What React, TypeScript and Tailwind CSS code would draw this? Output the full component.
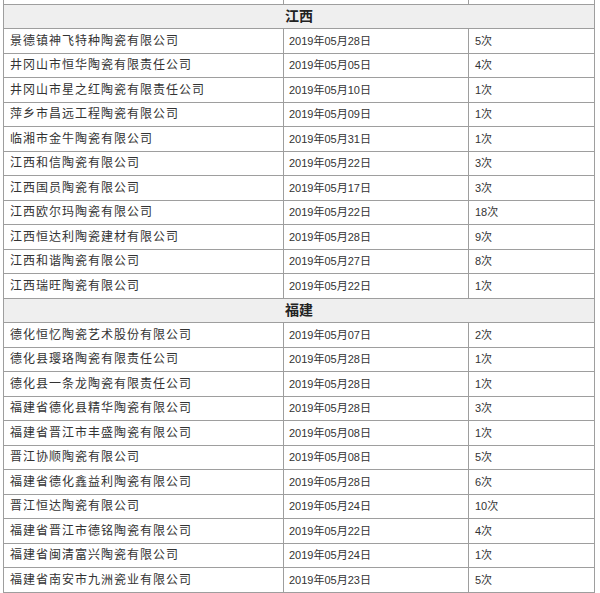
const jiangxi: [string, string, string][] = [
  ['景德镇神飞特种陶瓷有限公司', '2019年05月28日', '5次'],
  ['井冈山市恒华陶瓷有限责任公司', '2019年05月05日', '4次'],
  ['井冈山市星之红陶瓷有限责任公司', '2019年05月10日', '1次'],
  ['萍乡市昌远工程陶瓷有限公司', '2019年05月09日', '1次'],
  ['临湘市金牛陶瓷有限公司', '2019年05月31日', '1次'],
  ['江西和信陶瓷有限公司', '2019年05月22日', '3次'],
  ['江西国员陶瓷有限公司', '2019年05月17日', '3次'],
  ['江西欧尔玛陶瓷有限公司', '2019年05月22日', '18次'],
  ['江西恒达利陶瓷建材有限公司', '2019年05月28日', '9次'],
  ['江西和谐陶瓷有限公司', '2019年05月27日', '8次'],
  ['江西瑞旺陶瓷有限公司', '2019年05月22日', '1次'],
];

const fujian: [string, string, string][] = [
  ['德化恒忆陶瓷艺术股份有限公司', '2019年05月07日', '2次'],
  ['德化县璎珞陶瓷有限责任公司', '2019年05月28日', '1次'],
  ['德化县一条龙陶瓷有限责任公司', '2019年05月28日', '1次'],
  ['福建省德化县精华陶瓷有限公司', '2019年05月28日', '3次'],
  ['福建省晋江市丰盛陶瓷有限公司', '2019年05月08日', '1次'],
  ['晋江协顺陶瓷有限公司', '2019年05月08日', '5次'],
  ['福建省德化鑫益利陶瓷有限公司', '2019年05月28日', '6次'],
  ['晋江恒达陶瓷有限公司', '2019年05月24日', '10次'],
  ['福建省晋江市德铭陶瓷有限公司', '2019年05月22日', '4次'],
  ['福建省闽清富兴陶瓷有限公司', '2019年05月24日', '1次'],
  ['福建省南安市九洲瓷业有限公司', '2019年05月23日', '5次'],
];

const cell = 'border border-[#9e9e9e] px-[6px] py-0 align-middle';

function ProvinceRow({ name }: { name: string }) {
  return (
    <tr className="h-[24.5px] bg-[#efefef]">
      <td colSpan={3} className={`${cell} text-center text-[14px] font-bold text-[#222]`}>
        {name}
      </td>
    </tr>
  );
}

function DataRow({ row }: { row: [string, string, string] }) {
  return (
    <tr className="h-[24.5px]">
      <td className={`${cell} text-[12px] tracking-[1px] text-[#333]`}>{row[0]}</td>
      <td className={`${cell} pl-[5px] text-[11px] text-[#333]`}>{row[1]}</td>
      <td className={`${cell} text-[11px] text-[#333]`}>{row[2]}</td>
    </tr>
  );
}

export default function App() {
  return (
    <div
      className="h-[593px] w-[600px] overflow-hidden bg-white"
      style={{ fontFamily: '"Liberation Sans", "Noto Sans CJK SC", sans-serif' }}
    >
      <table className="ml-[3px] -mt-[21px] w-[591px] table-fixed border-collapse">
        <colgroup>
          <col className="w-[280px]" />
          <col className="w-[185px]" />
          <col className="w-[126px]" />
        </colgroup>
        <tbody>
          <tr className="h-[24.5px]">
            <td className={cell}></td>
            <td className={cell}></td>
            <td className={cell}></td>
          </tr>
          <ProvinceRow name="江西" />
          {jiangxi.map((r) => (
            <DataRow key={r[0]} row={r} />
          ))}
          <ProvinceRow name="福建" />
          {fujian.map((r) => (
            <DataRow key={r[0]} row={r} />
          ))}
          <ProvinceRow name="" />
        </tbody>
      </table>
    </div>
  );
}
